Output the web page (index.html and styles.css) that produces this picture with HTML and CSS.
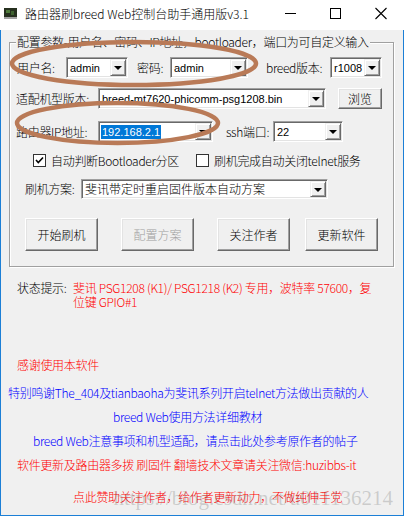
FILE: index.html
```html
<!DOCTYPE html>
<html lang="zh-CN">
<head>
<meta charset="utf-8">
<title>路由器刷breed Web控制台助手通用版v3.1</title>
<link rel="stylesheet" href="styles.css">
</head>
<body>
<div class="win">
  <div class="titlebar">
    <svg class="appicon" width="13" height="11" viewBox="0 0 13 11">
      <rect x="0" y="0" width="13" height="9" fill="#26301f"/>
      <rect x="2" y="2" width="4" height="3" fill="#4f7a3a"/>
      <rect x="7" y="3" width="3" height="4" fill="#3e6230"/>
      <rect x="0" y="9" width="13" height="2" fill="#a3a3a3"/>
    </svg>
    <div class="title">路由器刷breed Web控制台助手通用版v3.1</div>
    <div class="caption">
      <svg class="capbtn" width="46" height="30" viewBox="0 0 46 30"><line x1="19" y1="13.5" x2="30" y2="13.5" stroke="#000" stroke-width="1"/></svg>
      <svg class="capbtn" width="46" height="30" viewBox="0 0 46 30"><rect x="18.5" y="8.5" width="10" height="10" fill="none" stroke="#000" stroke-width="1"/></svg>
      <svg class="capbtn" width="46" height="30" viewBox="0 0 46 30"><path d="M17.5 8 L28.5 19 M28.5 8 L17.5 19" stroke="#000" stroke-width="1.1" fill="none"/></svg>
    </div>
  </div>

  <div class="client">
    <div class="group">
      <span class="legend">配置参数-用户名、密码、IP地址，bootloader，端口为可自定义输入</span>

      <div class="row row1">
        <span class="lbl lbl-user">用户名:</span>
        <div class="combo combo-user"><span class="val">admin</span><span class="drop"><i class="tri"></i></span></div>
        <span class="lbl lbl-pass">密码:</span>
        <div class="combo combo-pass"><span class="val">admin</span><span class="drop"><i class="tri"></i></span></div>
        <span class="lbl lbl-ver">breed版本:</span>
        <div class="combo combo-ver"><span class="val">r1008</span><span class="drop"><i class="tri"></i></span></div>
      </div>

      <div class="row row2">
        <span class="lbl lbl-wide">适配机型版本:</span>
        <div class="combo combo-model"><span class="val">breed-mt7620-phicomm-psg1208.bin</span><span class="drop"><i class="tri"></i></span></div>
        <button class="btn btn-browse">浏览</button>
      </div>

      <div class="row row3">
        <span class="lbl lbl-wide">路由器IP地址:</span>
        <div class="combo combo-ip"><span class="val"><span class="sel">192.168.2.1</span></span><span class="drop"><i class="tri"></i></span></div>
        <span class="lbl lbl-ssh">ssh端口:</span>
        <div class="combo combo-port"><span class="val">22</span><span class="drop"><i class="tri"></i></span></div>
      </div>

      <div class="row row4">
        <span class="check check-first"><svg width="11" height="11" viewBox="0 0 11 11"><path d="M2 5 L4.3 7.5 L9 2.5" stroke="#000" stroke-width="1.6" fill="none"/></svg></span>
        <span class="chklbl chklbl-first">自动判断Bootloader分区</span>
        <span class="check"></span>
        <span class="chklbl">刷机完成自动关闭telnet服务</span>
      </div>

      <div class="row row5">
        <span class="lbl lbl-plan">刷机方案:</span>
        <div class="combo combo-plan"><span class="val val-cjk">斐讯带定时重启固件版本自动方案</span><span class="drop"><i class="tri"></i></span></div>
      </div>

      <div class="row row-btns">
        <button class="btn btn-big btn-start">开始刷机</button>
        <button class="btn btn-big btn-gap disabled">配置方案</button>
        <button class="btn btn-big btn-gap">关注作者</button>
        <button class="btn btn-big btn-last">更新软件</button>
      </div>
    </div>

    <div class="status">
      <span class="status-lbl">状态提示:</span>
      <span class="status-msg">斐讯 PSG1208 (K1)/ PSG1218 (K2) 专用，波特率 57600，复<br>位键 GPIO#1</span>
    </div>

    <p class="line red thanks">感谢使用本软件</p>
    <p class="line blue special">特别鸣谢The_404及tianbaoha为斐讯系列开启telnet方法做出贡献的人</p>
    <p class="line blue guide">breed Web使用方法详细教材</p>
    <p class="line blue notice">breed Web注意事项和机型适配，请点击此处参考原作者的帖子</p>
    <p class="line red update">软件更新及路由器多拨 刷固件 翻墙技术文章请关注微信:huzibbs-it</p>
    <p class="line red donate">点此赞助关注作者，给作者更新动力，不做纯伸手党</p>

    <div class="watermark">https://blog.csdn.net/u011136214</div>
  </div>

  <svg class="marks" width="404" height="516" viewBox="0 0 404 516">
    <ellipse cx="134" cy="63.5" rx="122" ry="21.5" fill="none" stroke="#b97a57" stroke-width="4.5"/>
    <ellipse cx="117.5" cy="123" rx="100.5" ry="20" fill="none" stroke="#b97a57" stroke-width="4.5"/>
  </svg>
</div>
</body>
</html>
```

FILE: styles.css
```css
html, body {
  margin: 0;
  padding: 0;
  background: #fff;
}

body {
  font-family: "Noto Sans CJK SC", "Noto Sans", sans-serif;
  font-size: 12px;
  font-weight: 300;
  line-height: 14px;
  color: #000;
}

.win {
  position: relative;
  width: 404px;
  height: 516px;
  box-shadow: 0 2px 0 #000;
}

/* ---------- title bar ---------- */
.titlebar {
  height: 30px;
  display: flex;
  align-items: flex-start;
  background: #fff;
}

.appicon {
  flex: none;
  margin: 8px 0 0 4px;
}

.title {
  flex: 1;
  margin: 6px 0 0 8px;
  line-height: 15px;
  white-space: nowrap;
}

.caption {
  display: flex;
  flex: none;
}

.capbtn {
  display: block;
}

/* ---------- client area ---------- */
.client {
  position: relative;
  height: 486px;
  box-sizing: border-box;
  border: 1px solid #1c7fd6;
  border-top: 0;
  background: #f0f0f0;
  padding-top: 12px;
  letter-spacing: -0.3px;
}

.group {
  position: relative;
  margin-left: 8px;
  width: 385px;
  height: 225px;
  box-sizing: border-box;
  border: 1px solid #a0a0a0;
  box-shadow: inset 1px 1px 0 #fff, 1px 1px 0 #fff;
  padding-left: 6px;
}

.legend {
  position: absolute;
  top: -8px;
  left: 6px;
  padding: 0 1px;
  background: #f0f0f0;
  white-space: nowrap;
}

.row {
  display: flex;
  align-items: center;
  height: 21px;
}

.row1 { margin-top: 14px; }
.row2 { margin-top: 10px; }
.row3 { margin-top: 12px; }
.row4 { margin-top: 12px; height: 13px; }
.row5 { margin-top: 12px; height: 20px; }
.row-btns { margin-top: 19px; height: 33px; }

.lbl {
  flex: none;
  white-space: nowrap;
}

.lbl-user { width: 50px; padding-left: 1px; box-sizing: border-box; }
.lbl-pass { width: 33px; margin-left: 9px; }
.lbl-ver  { width: 64px; margin-left: 18px; }
.lbl-wide { width: 82px; }
.lbl-ssh  { width: 47px; margin-left: 13px; }
.lbl-plan { width: 56px; margin-left: 9px; }

/* ---------- combo box ---------- */
.combo {
  flex: none;
  position: relative;
  display: flex;
  align-items: stretch;
  height: 21px;
  box-sizing: border-box;
  background: #fff;
  border: 1px solid;
  border-color: #a0a0a0 #fff #fff #a0a0a0;
  box-shadow: inset 1px 1px 0 #696969, inset -1px -1px 0 #e3e3e3;
  padding: 1px;
}

.row5 .combo { height: 20px; }

.combo-user  { width: 62px; }
.combo-pass  { width: 78px; }
.combo-ver   { width: 52px; }
.combo-model { width: 228px; }
.combo-ip    { width: 115px; }
.combo-port  { width: 70px; }
.combo-plan  { width: 247px; }

.val {
  flex: 1;
  min-width: 0;
  overflow: hidden;
  white-space: nowrap;
  padding-left: 2px;
  display: flex;
  align-items: center;
  font-family: "Liberation Sans", "Noto Sans CJK SC", sans-serif;
  font-size: 11px;
  font-weight: 400;
  letter-spacing: 0;
}

.val-cjk {
  font-family: "Noto Sans CJK SC", sans-serif;
  font-size: 12px;
  font-weight: 300;
}

.sel {
  background: #0078d7;
  color: #fff;
  margin-left: -1px;
  padding: 0 1px;
}

.drop {
  flex: none;
  width: 16px;
  box-sizing: border-box;
  background: #f0f0f0;
  border: 1px solid;
  border-color: #f0f0f0 #696969 #696969 #f0f0f0;
  box-shadow: inset 1px 1px 0 #fff, inset -1px -1px 0 #a0a0a0;
  display: flex;
  align-items: center;
  justify-content: center;
}

.tri {
  display: block;
  width: 0;
  height: 0;
  border-left: 4px solid transparent;
  border-right: 4px solid transparent;
  border-top: 4px solid #000;
  margin-top: 1px;
}

/* ---------- buttons ---------- */
.btn {
  flex: none;
  font: inherit;
  font-size: 12px;
  letter-spacing: 0;
  color: #000;
  padding: 0;
  margin: 0;
  background: #f0f0f0;
  box-sizing: border-box;
  border: 1px solid;
  border-color: #fff #696969 #696969 #fff;
  box-shadow: inset -1px -1px 0 #a0a0a0, inset 1px 1px 0 #e3e3e3;
  line-height: 14px;
}

.btn-browse {
  width: 44px;
  height: 21px;
  margin-left: 12px;
}

.btn-big {
  width: 73px;
  height: 33px;
}

.btn-start { margin-left: 9px; }
.btn-gap   { margin-left: 23px; }
.btn-last  { margin-left: 15px; }

.btn.disabled { color: #a0a0a0; }

/* ---------- checkboxes ---------- */
.check {
  flex: none;
  width: 13px;
  height: 13px;
  box-sizing: border-box;
  background: #fff;
  border: 1px solid #333;
  display: flex;
  align-items: center;
  justify-content: center;
}

.check-first { margin-left: 17px; }

.chklbl {
  flex: none;
  margin-left: 5px;
  white-space: nowrap;
}

.chklbl-first { width: 145px; }

/* ---------- status + links ---------- */
.status {
  display: flex;
  margin-top: 14px;
  padding-left: 16px;
}

.status-lbl {
  flex: none;
  width: 56px;
  white-space: nowrap;
}

.status-msg {
  color: #ff0000;
  white-space: nowrap;
}

.line {
  margin: 0;
  white-space: nowrap;
}

.red  { color: #ff0000; }
.blue { color: #0000ff; }

.thanks  { margin-top: 49px; padding-left: 16px; }
.special { margin-top: 14px; padding-left: 7px; }
.guide   { margin-top: 10px; padding-left: 112px; }
.notice  { margin-top: 10px; padding-left: 32px; }
.update  { margin-top: 10px; padding-left: 16px; }
.donate  { margin-top: 18px; padding-left: 72px; }

.watermark {
  position: absolute;
  top: 456px;
  right: 10px;
  font-family: "Liberation Serif", serif;
  font-size: 21px;
  font-weight: 400;
  letter-spacing: 0;
  line-height: 24px;
  color: rgba(110, 110, 110, 0.28);
  white-space: nowrap;
  pointer-events: none;
}

/* ---------- annotation ellipses ---------- */
.marks {
  position: absolute;
  top: 0;
  left: 0;
  pointer-events: none;
}
```
